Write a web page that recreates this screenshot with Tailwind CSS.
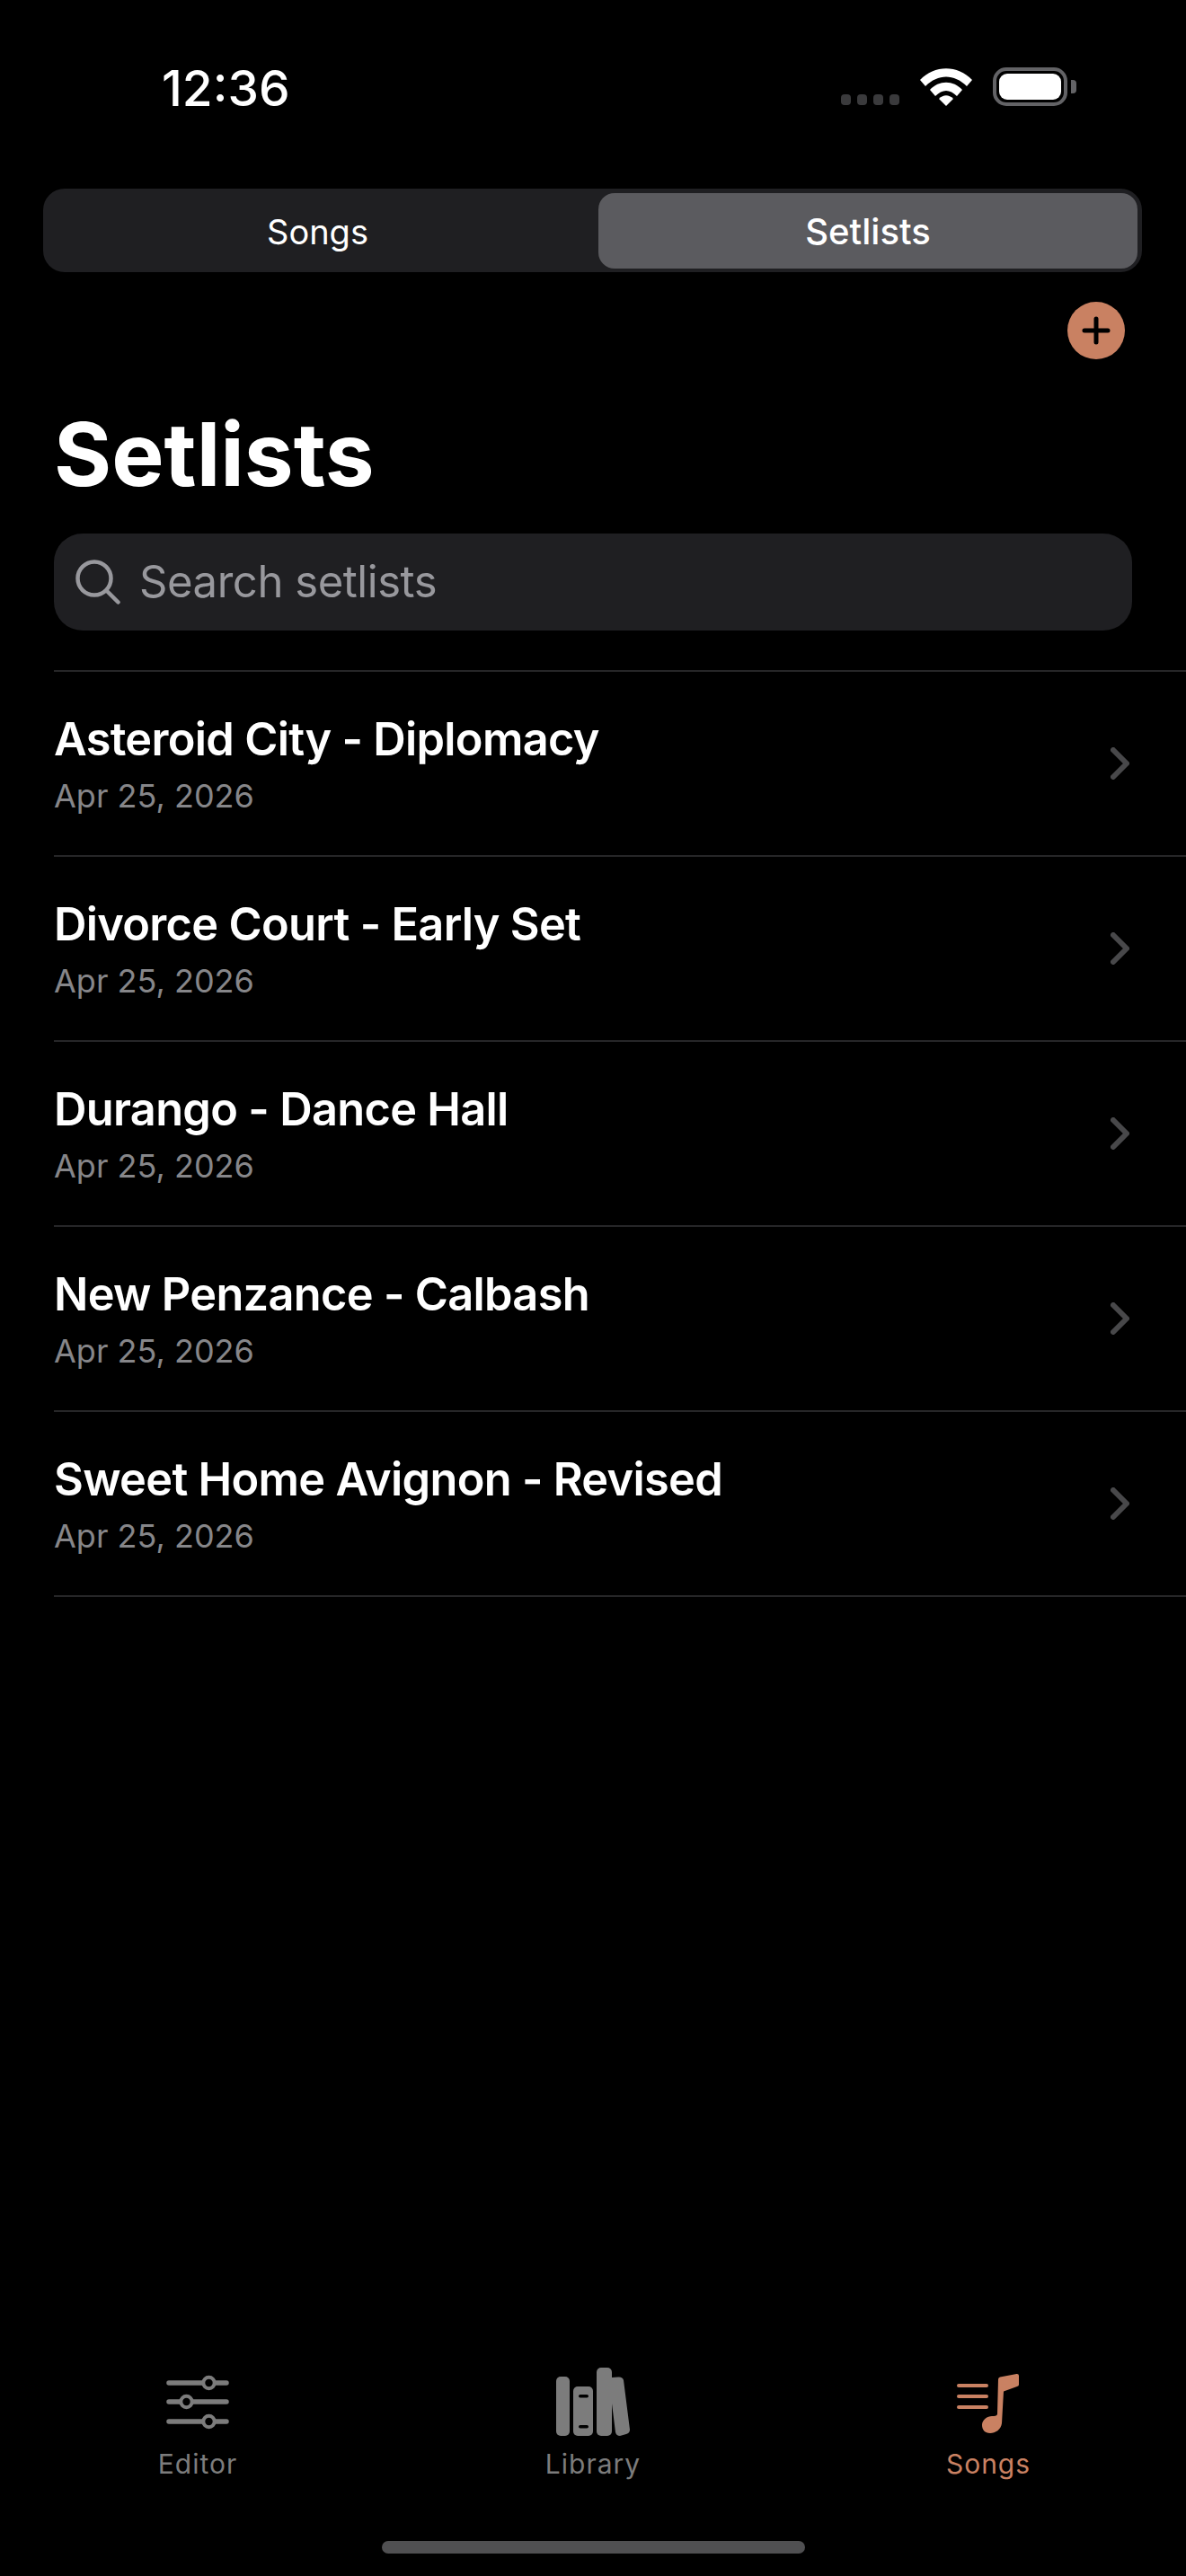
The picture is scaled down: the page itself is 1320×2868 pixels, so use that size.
<!DOCTYPE html>
<html>
<head>
<meta charset="utf-8">
<script src="https://cdn.jsdelivr.net/npm/@tailwindcss/browser@4"></script>
</head>
<body class="bg-black">
<div class="relative w-[1320px] h-[2868px] bg-black text-white flex flex-col font-['Inter',sans-serif] overflow-hidden">
  <!-- status bar -->
  <div class="h-[210px] shrink-0 flex items-start justify-between pl-[180px] pr-[122px] pt-[70px]">
    <span class="text-[55px] leading-[56px] font-medium">12:36</span>
    <div class="flex items-end gap-[23px] pt-[5px]">
      <div class="flex gap-[7px] pb-[1px]">
        <span class="w-[11px] h-[12px] rounded-[4px] bg-[#3a3a3c]"></span>
        <span class="w-[11px] h-[12px] rounded-[4px] bg-[#3a3a3c]"></span>
        <span class="w-[11px] h-[12px] rounded-[4px] bg-[#3a3a3c]"></span>
        <span class="w-[11px] h-[12px] rounded-[4px] bg-[#3a3a3c]"></span>
      </div>
      <svg width="58" height="42" viewBox="0 0 58 42" fill="white">
        <path d="M0 13 C16 -4 42 -4 58 13 L52 20 C38 6 20 6 6 20 Z"/>
        <path d="M11 24 C21 13 37 13 47 24 L41 31 C33 23 25 23 17 31 Z"/>
        <path d="M21 34 C26 29 32 29 37 34 L29 42 Z"/>
      </svg>
      <div class="flex items-center">
        <div class="w-[83px] h-[43px] rounded-[15px] border-[4px] border-[#636366] p-[3px]">
          <div class="w-full h-full rounded-[9px] bg-white"></div>
        </div>
        <div class="w-[6px] h-[15px] ml-[4px] rounded-r-[4px] bg-[#636366]"></div>
      </div>
    </div>
  </div>
  <!-- segmented control -->
  <div class="h-[93px] shrink-0 ml-[48px] w-[1223px] rounded-[24px] bg-[#1f1f22] flex items-center pr-[5px]">
    <div class="flex-1 pr-[7px] pt-[3px] text-center text-[38px] text-white">Songs</div>
    <div class="w-[600px] h-[84px] pt-[2px] rounded-[18px] bg-[#5b5b5f] flex items-center justify-center text-[40px] font-medium">Setlists</div>
  </div>
  <!-- add button -->
  <div class="flex justify-end pr-[68px] pt-[33px] shrink-0">
    <div class="w-[64px] h-[64px] rounded-full bg-[#c98162] flex items-center justify-center">
      <svg width="32" height="32" viewBox="0 0 32 32" stroke="black" stroke-width="5" stroke-linecap="round"><path d="M16 3V29M3 16H29"/></svg>
    </div>
  </div>
  <h1 class="ml-[60px] mt-[48px] text-[98px] leading-[116px] font-bold shrink-0">Setlists</h1>
  <!-- search -->
  <div class="mx-[60px] mt-[30px] h-[108px] shrink-0 rounded-[32px] bg-[#1f1f22] flex items-center pl-[24px] gap-[21px]">
    <svg width="50" height="50" viewBox="0 0 50 50" fill="none" stroke="#98989d" stroke-width="4.5" stroke-linecap="round"><circle cx="21" cy="21" r="18.5"/><path d="M34.5 34.5L47.5 47.5"/></svg>
    <span class="text-[49px] tracking-[-0.45px] text-[#98989d]">Search setlists</span>
  </div>
  <!-- list -->
  <div class="ml-[60px] mt-[44px] border-t-2 border-[#262628] shrink-0">
    <div class="h-[206px] border-b-2 border-[#262628] flex items-center justify-between pr-[63px]">
      <div><div class="text-[50.5px] tracking-[-0.7px] leading-[60px] font-semibold">Asteroid City - Diplomacy</div><div class="text-[36px] leading-[44px] text-[#868689] mt-[11px]">Apr 25, 2026</div></div>
      <svg width="21" height="36" viewBox="0 0 21 36" fill="none" stroke="#48484a" stroke-width="6" stroke-linecap="round" stroke-linejoin="round"><path d="M3 3L18 18L3 33"/></svg>
    </div>
    <div class="h-[206px] border-b-2 border-[#262628] flex items-center justify-between pr-[63px]">
      <div><div class="text-[50.5px] tracking-[-0.7px] leading-[60px] font-semibold">Divorce Court - Early Set</div><div class="text-[36px] leading-[44px] text-[#868689] mt-[11px]">Apr 25, 2026</div></div>
      <svg width="21" height="36" viewBox="0 0 21 36" fill="none" stroke="#48484a" stroke-width="6" stroke-linecap="round" stroke-linejoin="round"><path d="M3 3L18 18L3 33"/></svg>
    </div>
    <div class="h-[206px] border-b-2 border-[#262628] flex items-center justify-between pr-[63px]">
      <div><div class="text-[50.5px] tracking-[-0.7px] leading-[60px] font-semibold">Durango - Dance Hall</div><div class="text-[36px] leading-[44px] text-[#868689] mt-[11px]">Apr 25, 2026</div></div>
      <svg width="21" height="36" viewBox="0 0 21 36" fill="none" stroke="#48484a" stroke-width="6" stroke-linecap="round" stroke-linejoin="round"><path d="M3 3L18 18L3 33"/></svg>
    </div>
    <div class="h-[206px] border-b-2 border-[#262628] flex items-center justify-between pr-[63px]">
      <div><div class="text-[50.5px] tracking-[-0.7px] leading-[60px] font-semibold">New Penzance - Calbash</div><div class="text-[36px] leading-[44px] text-[#868689] mt-[11px]">Apr 25, 2026</div></div>
      <svg width="21" height="36" viewBox="0 0 21 36" fill="none" stroke="#48484a" stroke-width="6" stroke-linecap="round" stroke-linejoin="round"><path d="M3 3L18 18L3 33"/></svg>
    </div>
    <div class="h-[206px] border-b-2 border-[#262628] flex items-center justify-between pr-[63px]">
      <div><div class="text-[50.5px] tracking-[-0.7px] leading-[60px] font-semibold">Sweet Home Avignon - Revised</div><div class="text-[36px] leading-[44px] text-[#868689] mt-[11px]">Apr 25, 2026</div></div>
      <svg width="21" height="36" viewBox="0 0 21 36" fill="none" stroke="#48484a" stroke-width="6" stroke-linecap="round" stroke-linejoin="round"><path d="M3 3L18 18L3 33"/></svg>
    </div>
  </div>
  <div class="flex-1"></div>
  <!-- tab bar -->
  <div class="h-[125px] shrink-0 grid grid-cols-3 mb-[107px] text-[#7c7c7c]">
    <div class="flex flex-col items-center">
      <svg width="70" height="76" viewBox="0 0 70 76" fill="none" stroke="#7c7c7c" stroke-linecap="round"><path stroke-width="5.5" d="M3 17H67M3 38H67M3 60H67"/><circle cx="47.5" cy="17" r="6.2" fill="black" stroke-width="4"/><circle cx="22.5" cy="38" r="6.2" fill="black" stroke-width="4"/><circle cx="47.5" cy="60" r="6.2" fill="black" stroke-width="4"/></svg>
      <span class="text-[30px] leading-[36px] mt-[13px] tracking-[1px]">Editor</span>
    </div>
    <div class="flex flex-col items-center">
      <svg width="82" height="76" viewBox="0 0 82 76" fill="#7c7c7c"><rect x="0" y="10" width="15" height="66" rx="5"/><rect x="19" y="21" width="22" height="55" rx="5"/><rect x="45" y="0" width="17" height="76" rx="5"/><path d="M62 11 L69 10.5 Q74 10 75 14 L82 69 Q82 73 78 74 L71 76 Q67 76 66 72 L62 40 Z"/><rect x="25" y="30" width="11" height="3.5" rx="1.75" fill="black"/><rect x="25" y="64" width="11" height="3.5" rx="1.75" fill="black"/></svg>
      <span class="text-[30px] leading-[36px] mt-[13px] tracking-[1px]">Library</span>
    </div>
    <div class="flex flex-col items-center text-[#c98162]">
      <svg width="70" height="76" viewBox="0 0 70 76" fill="#c98162"><rect x="0" y="18" width="35" height="4" rx="2"/><rect x="0" y="30" width="35" height="4" rx="2"/><rect x="0" y="42" width="35" height="4" rx="2"/><path d="M46 13 Q46 11 48 10.5 L66.5 7 Q69 6.8 69 9 V19 Q69 20.5 67 21 L52 26.5 L50 62 C49 69 43 73 37 73 C31 73 28 69 28 64 C28 58 34 54 39 54 C42 54 44 54 45 52 Z"/></svg>
      <span class="text-[30px] leading-[36px] mt-[13px] tracking-[1px]">Songs</span>
    </div>
  </div>
  <div class="absolute left-[425px] top-[2829px] w-[471px] h-[14px] rounded-full bg-[#505052]"></div>
</div>
</body>
</html>
